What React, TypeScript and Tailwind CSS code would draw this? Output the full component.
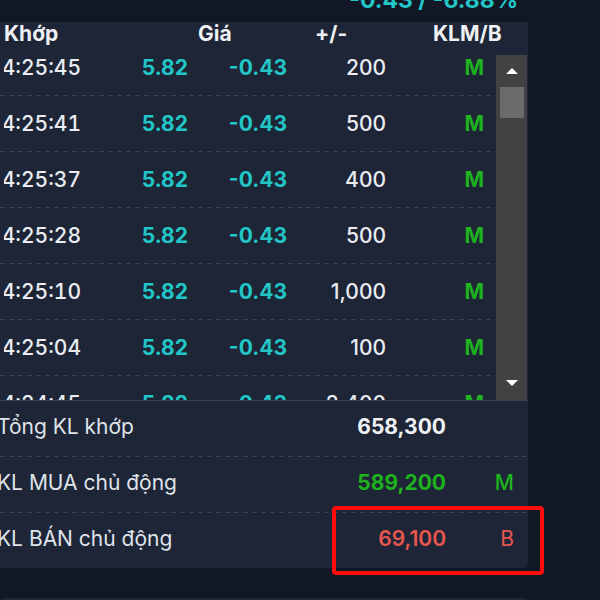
const rows = [
  { t: "14:25:45", p: "5.82", c: "-0.43", v: "200" },
  { t: "14:25:41", p: "5.82", c: "-0.43", v: "500" },
  { t: "14:25:37", p: "5.82", c: "-0.43", v: "400" },
  { t: "14:25:28", p: "5.82", c: "-0.43", v: "500" },
  { t: "14:25:10", p: "5.82", c: "-0.43", v: "1,000" },
  { t: "14:25:04", p: "5.82", c: "-0.43", v: "100" },
  { t: "14:24:45", p: "5.82", c: "-0.43", v: "2,400" },
];

function Dash() {
  return <div className="h-px w-full bg-[linear-gradient(to_right,#3a4355_5px,transparent_5px)] bg-[length:9px_1px] bg-repeat-x" />;
}

function TradeRow({ t, p, c, v }: { t: string; p: string; c: string; v: string }) {
  return (
    <div className="flex flex-col">
      <div className="flex h-[55px] items-center text-[21px] leading-6">
        {/* panel is scrolled sideways a bit, the hour's first digit sits under the edge */}
        <div className="ml-[4px] flex w-[77px] shrink-0 justify-end overflow-hidden whitespace-nowrap font-medium tabular-nums text-[#e9ecf1]">{t}</div>
        <div className="w-[107px] shrink-0 text-right font-bold text-[#22c6c6]">{p}</div>
        <div className="w-[99px] shrink-0 text-right font-bold text-[#22c6c6]">{c}</div>
        <div className="w-[99px] shrink-0 text-right font-medium text-[#e9ecf1]">{v}</div>
        <div className="w-[98px] shrink-0 text-right font-bold text-[#1fb21f]">M</div>
      </div>
      <Dash />
    </div>
  );
}

function Scrollbar() {
  return (
    <div className="flex w-[31px] shrink-0 flex-col items-center bg-[#424242]">
      <div className="flex h-[32px] w-full items-center justify-center">
        <svg width="14" height="8" viewBox="0 0 14 8"><path d="M1 7 L7 1 L13 7 Z" fill="#ffffff" /></svg>
      </div>
      <div className="h-[31px] w-[24px] bg-[#6b6b6b]" />
      <div className="flex-1" />
      <div className="flex h-[28px] w-full items-center justify-center pb-[6px]">
        <svg width="14" height="8" viewBox="0 0 14 8"><path d="M1 1 L13 1 L7 7 Z" fill="#ffffff" /></svg>
      </div>
    </div>
  );
}

function SumRow({ label, value, valueCls, tag, tagCls, last }: { label: string; value: string; valueCls: string; tag?: string; tagCls?: string; last?: boolean }) {
  return (
    <div className="flex flex-col">
      <div className="flex h-[55px] items-center pb-[4px] text-[21px] leading-6">
        <div className="-ml-[3px] w-[449px] shrink-0 whitespace-nowrap text-[#dfe3ea]">{label}</div>
        <div className={`flex w-[0px] shrink-0 justify-end whitespace-nowrap ${valueCls}`}>{value}</div>
        <div className={`w-[68px] shrink-0 text-right ${tagCls ?? ""}`}>{tag}</div>
      </div>
      {!last && <Dash />}
    </div>
  );
}

export default function App() {
  return (
    <div className="relative h-[600px] w-[600px] overflow-hidden bg-[#121726] font-['Inter',sans-serif]">
      <div className="flex h-[22px] w-[528px] justify-end overflow-hidden pr-[10px]">
        <span className="-mt-[11px] text-[23px] font-bold leading-none text-[#22c6c6]">-0.43 / -6.88%</span>
      </div>

      <div className="w-[528px] rounded-br-[6px] bg-[#1d2536]">
        <div className="flex h-[33px] text-[21px] font-bold leading-6 text-[#eef0f4]">
          <div className="w-[198px] shrink-0 pl-[4px]">Khớp</div>
          <div className="w-[117px] shrink-0">Giá</div>
          <div className="w-[118px] shrink-0">+/-</div>
          <div>KLM/B</div>
        </div>

        <div className="flex h-[345px]">
          <div className="w-[496px] shrink-0 overflow-hidden">
            <div className="-mt-[15px]">
              {rows.map((r, i) => (
                <TradeRow key={i} {...r} />
              ))}
            </div>
          </div>
          <Scrollbar />
        </div>

        <div className="h-px bg-[#394254]" />
        <SumRow label="Tổng KL khớp" value="658,300" valueCls="font-bold text-[#eef0f4]" />
        <SumRow label="KL MUA chủ động" value="589,200" valueCls="font-bold text-[#1fb21f]" tag="M" tagCls="font-medium text-[#1fb21f]" />
        <SumRow label="KL BÁN chủ động" value="69,100" valueCls="font-semibold text-[#e8564f]" tag="B" tagCls="text-[#e8564f]" last />
      </div>

      <div className="mt-[30px] h-[10px] w-[528px] rounded-t-[4px] bg-[#1d2536]" />

      <div className="absolute left-[332px] top-[506px] h-[69px] w-[212px] rounded-[4px] border-[4px] border-[#ff0d0d]" />
    </div>
  );
}
